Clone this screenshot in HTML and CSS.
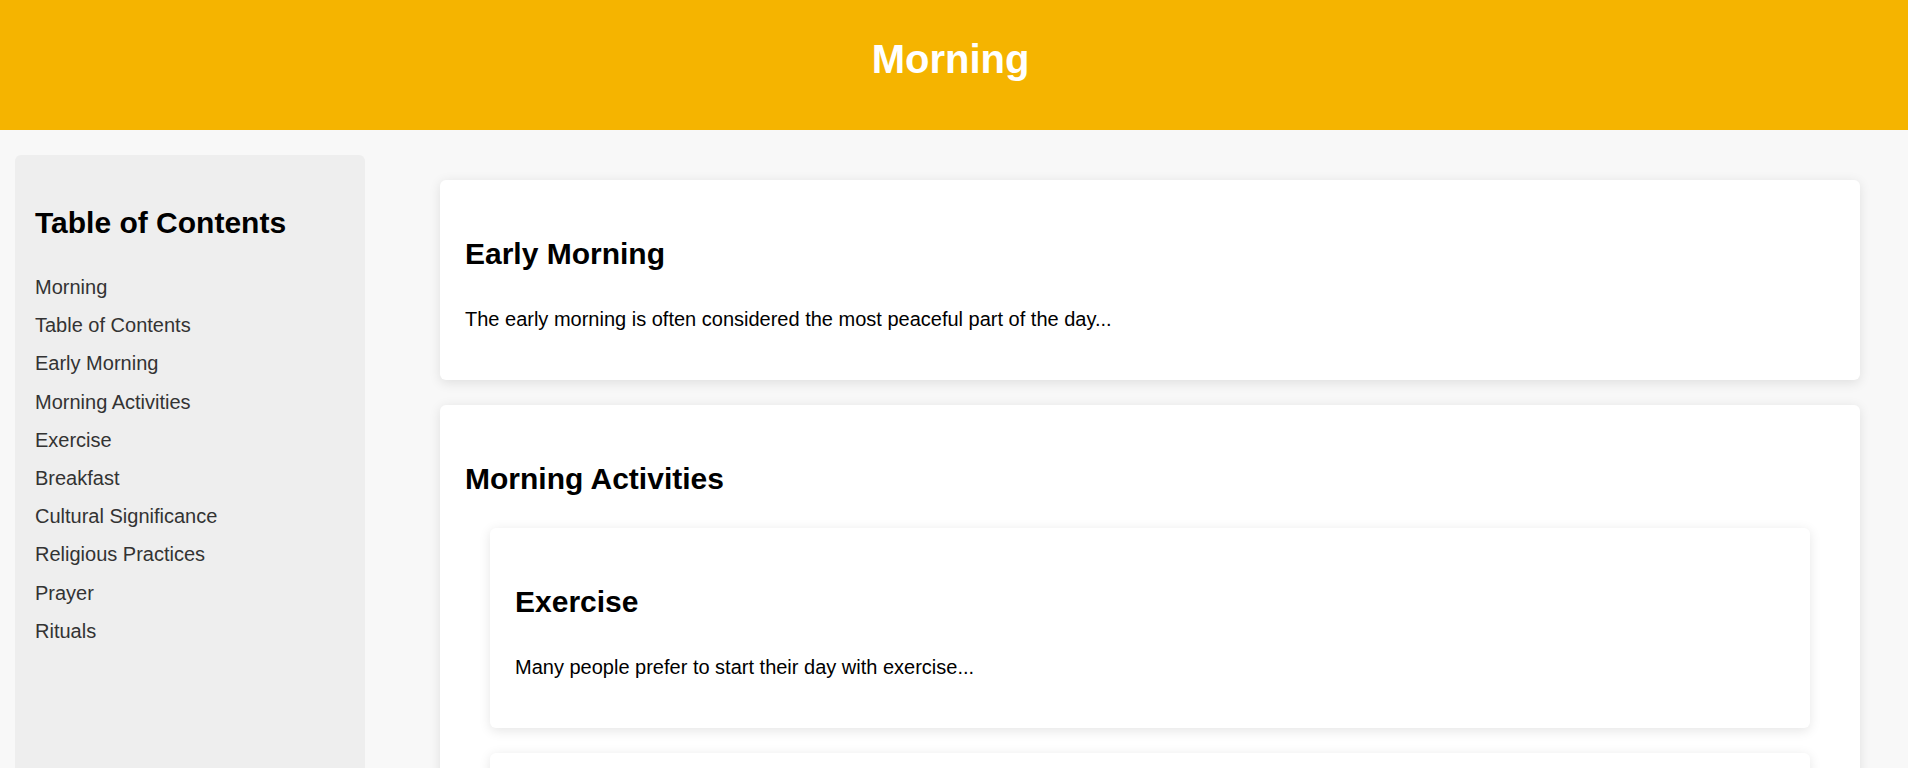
FILE: index.html
```html
<!DOCTYPE html>
<html lang="en">
<head>
<meta charset="utf-8">
<title>Morning</title>
<link rel="stylesheet" href="styles.css">
</head>
<body>
<header class="site-header">
  <h1 class="site-title">Morning</h1>
</header>
<div class="layout">
  <nav class="toc">
    <h2 class="toc-title">Table of Contents</h2>
    <ul class="toc-list">
      <li class="toc-item"><a class="toc-link" href="#morning">Morning</a></li>
      <li class="toc-item"><a class="toc-link" href="#toc">Table of Contents</a></li>
      <li class="toc-item"><a class="toc-link" href="#early-morning">Early Morning</a></li>
      <li class="toc-item"><a class="toc-link" href="#morning-activities">Morning Activities</a></li>
      <li class="toc-item"><a class="toc-link" href="#exercise">Exercise</a></li>
      <li class="toc-item"><a class="toc-link" href="#breakfast">Breakfast</a></li>
      <li class="toc-item"><a class="toc-link" href="#cultural-significance">Cultural Significance</a></li>
      <li class="toc-item"><a class="toc-link" href="#religious-practices">Religious Practices</a></li>
      <li class="toc-item"><a class="toc-link" href="#prayer">Prayer</a></li>
      <li class="toc-item"><a class="toc-link" href="#rituals">Rituals</a></li>
    </ul>
  </nav>
  <main class="content">
    <section class="card" id="early-morning">
      <h2 class="card-title">Early Morning</h2>
      <p class="card-text">The early morning is often considered the most peaceful part of the day...</p>
    </section>
    <section class="card" id="morning-activities">
      <h2 class="card-title">Morning Activities</h2>
      <section class="card card-nested" id="exercise">
        <h2 class="card-title">Exercise</h2>
        <p class="card-text">Many people prefer to start their day with exercise...</p>
      </section>
      <section class="card card-nested" id="breakfast">
        <h2 class="card-title">Breakfast</h2>
        <p class="card-text">Breakfast is often called the most important meal of the day...</p>
      </section>
    </section>
    <section class="card" id="cultural-significance">
      <h2 class="card-title">Cultural Significance</h2>
      <section class="card card-nested" id="religious-practices">
        <h2 class="card-title">Religious Practices</h2>
        <section class="card card-nested" id="prayer">
          <h2 class="card-title">Prayer</h2>
          <p class="card-text">Morning prayers are a common practice in many religions...</p>
        </section>
        <section class="card card-nested" id="rituals">
          <h2 class="card-title">Rituals</h2>
          <p class="card-text">Various cultures have unique morning rituals...</p>
        </section>
      </section>
    </section>
  </main>
</div>
</body>
</html>
```

FILE: styles.css
```css
html, body {
  margin: 0;
  padding: 0;
}

body {
  background: #f8f8f8;
  color: #000;
  font-family: "Liberation Sans", Arial, Helvetica, sans-serif;
  font-size: 20px;
  line-height: 1.6;
}

.site-header {
  background: #f5b400;
  color: #fff;
  text-align: center;
  height: 130px;
  box-sizing: border-box;
  padding: 27px 7px 0 0;
}

.site-title {
  margin: 0;
  font-size: 40px;
  line-height: 64px;
  font-weight: bold;
}

.layout {
  display: flex;
  align-items: stretch;
  gap: 75px;
  padding: 25px 48px 0 15px;
}

.toc {
  flex: 0 0 350px;
  box-sizing: border-box;
  background: #eeeeee;
  border-radius: 6px;
  padding: 19px 20px 20px;
  min-height: 900px;
}

.toc-title {
  font-size: 30px;
  line-height: 48px;
  margin: 24.5px 0;
  color: #000;
}

.toc-list {
  list-style: none;
  margin: 20px 0;
  padding: 0;
}

.toc-item {
  margin-bottom: 6.2px;
  line-height: 32px;
}

.toc-link {
  color: #333;
  text-decoration: none;
}

.content {
  flex: 1 1 auto;
  min-width: 0;
  padding-top: 25px;
}

.card {
  background: #fff;
  border-radius: 6px;
  box-shadow: 0 2.5px 12px rgba(0, 0, 0, 0.1);
  padding: 25px;
  margin-bottom: 25px;
}

.card-nested {
  margin: 0 25px 25px;
}

.card-title {
  font-size: 30px;
  line-height: 48px;
  margin: 25px 0;
}

.card-text {
  margin: 20px 0;
  line-height: 32px;
}
```
